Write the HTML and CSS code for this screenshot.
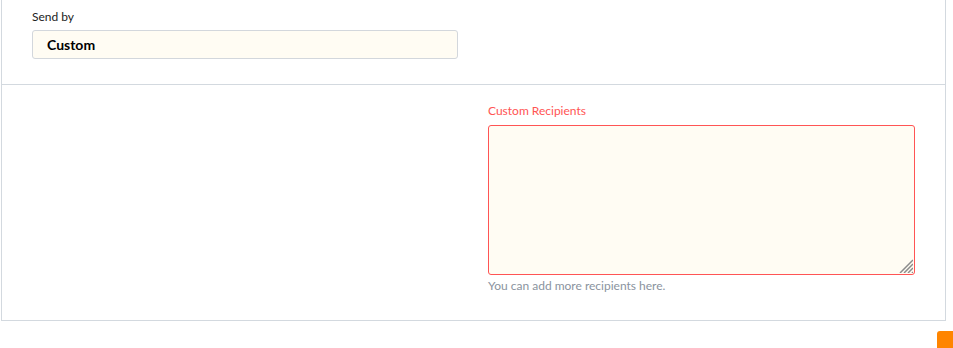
FILE: index.html
```html
<!DOCTYPE html>
<html lang="en">
<head>
  <meta charset="UTF-8" />
  <meta name="viewport" content="width=device-width, initial-scale=1.0" />
  <title>Notification Settings</title>
  <link rel="stylesheet" href="styles.css">
</head>
<body>
  <div class="panel">
    <div class="section">
      <div class="row">
        <div class="field">
          <label class="field-label">Send by</label>
          <div class="select-box">Custom</div>
        </div>
      </div>
    </div>

    <div class="section last">
      <div class="row">
        <div class="field"></div>
        <div class="field has-error">
          <label class="field-label">Custom Recipients</label>
          <div class="textarea-wrap">
            <textarea class="textarea"></textarea>
            <svg class="grip" width="14" height="14" viewBox="0 0 14 14">
              <path d="M1 14L14 1M5 14L14 5M9 14L14 9M13 14L14 13" stroke="#8c8c8c" stroke-width="1.5" />
            </svg>
          </div>
          <div class="help-text">You can add more recipients here.</div>
        </div>
      </div>
    </div>
  </div>

  <div class="chat-tab"></div>
</body>
</html>
```

FILE: styles.css
```css
body {
  margin: 0;
  font-family: Lato, "Open Sans", sans-serif;
  font-size: 12px;
  color: #222;
  background: #fff;
}

.panel {
  width: 945px;
  margin-left: 1px;
  border: 1px solid #d3d9df;
  border-top: none;
  box-sizing: border-box;
}

.section {
  padding: 9px 30px 25px 30px;
  border-bottom: 1px solid #d3d9df;
}

.section.last {
  padding-top: 18px;
  padding-bottom: 26px;
  border-bottom: none;
}

.row {
  display: grid;
  grid-template-columns: 426px 1fr;
  gap: 30px;
}

.field-label {
  display: block;
  line-height: 16px;
  margin-bottom: 5px;
}

.select-box {
  height: 29px;
  box-sizing: border-box;
  border: 1px solid #d3d7dc;
  border-radius: 3px;
  background: #fffcf3;
  padding: 0 14px;
  font-size: 14px;
  font-weight: bold;
  line-height: 27px;
  color: #000;
}

.has-error .field-label {
  color: #ff5454;
  margin-bottom: 6px;
}

.textarea-wrap {
  position: relative;
}

.textarea {
  display: block;
  width: 100%;
  height: 150px;
  box-sizing: border-box;
  border: 1px solid #ff5454;
  border-radius: 3px;
  background: #fffcf3;
  font-family: inherit;
  font-size: 12px;
  margin: 0;
  resize: none;
}

.grip {
  position: absolute;
  right: 2px;
  bottom: 2px;
}

.help-text {
  margin-top: 3px;
  line-height: 16px;
  color: #8a939e;
}

.chat-tab {
  position: fixed;
  right: 0;
  bottom: 0;
  width: 16px;
  height: 17px;
  background: #ff8500;
  border-top-left-radius: 3px;
}
```
